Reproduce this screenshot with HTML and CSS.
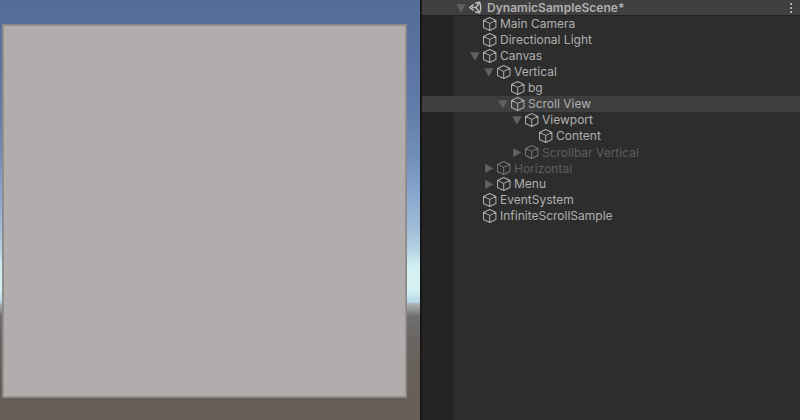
FILE: index.html
```html
<!DOCTYPE html>
<html lang="en">
<head>
<meta charset="utf-8">
<title>DynamicSampleScene</title>
<link rel="stylesheet" href="styles.css">
</head>
<body>
<svg width="0" height="0" class="defs">
  <symbol id="cube" viewBox="0 0 14 14"><path d="M6.7 .6 12.9 3.4V10.6L6.7 13.5 .5 10.6V3.4ZM.5 3.4 6.7 6.4 12.9 3.4M6.7 6.4V13.5"/></symbol>
  <symbol id="down" viewBox="0 0 10 9"><path d="M.2.3h9.4L4.9 8.8Z"/></symbol>
  <symbol id="right" viewBox="0 0 10 9"><path d="M1.2 0v9L9.4 4.5Z"/></symbol>
</svg>
<div class="editor">
  <main class="game"><div class="canvas"></div></main>
  <aside class="hierarchy">
    <header class="scene">
      <svg class="arrow"><use href="#down"/></svg>
      <svg class="unity" viewBox="0 0 13 13"><path d="M4.6 3.4 .9 6.5 4.6 9.6M6 2.2 10.6 1.1 11.6 5M6 10.8 10.6 11.9 11.6 8M11.6 4V9M3 6.5H7L10.3 1.6M7 6.5 10.3 11.4"/></svg>
      <span class="title">DynamicSampleScene*</span>
      <span class="more"><i></i><i></i><i></i></span>
    </header>
    <div class="tree">
      <div class="row l1"><span class="arrow"></span><svg class="cube"><use href="#cube"/></svg><span>Main Camera</span></div>
      <div class="row l1"><span class="arrow"></span><svg class="cube"><use href="#cube"/></svg><span>Directional Light</span></div>
      <div class="row l1"><svg class="arrow"><use href="#down"/></svg><svg class="cube"><use href="#cube"/></svg><span>Canvas</span></div>
      <div class="row l2"><svg class="arrow"><use href="#down"/></svg><svg class="cube"><use href="#cube"/></svg><span>Vertical</span></div>
      <div class="row l3"><span class="arrow"></span><svg class="cube"><use href="#cube"/></svg><span>bg</span></div>
      <div class="row l3 selected"><svg class="arrow"><use href="#down"/></svg><svg class="cube"><use href="#cube"/></svg><span>Scroll View</span></div>
      <div class="row l4"><svg class="arrow"><use href="#down"/></svg><svg class="cube"><use href="#cube"/></svg><span>Viewport</span></div>
      <div class="row l5"><span class="arrow"></span><svg class="cube"><use href="#cube"/></svg><span>Content</span></div>
      <div class="row l4 inactive"><svg class="arrow"><use href="#right"/></svg><svg class="cube"><use href="#cube"/></svg><span>Scrollbar Vertical</span></div>
      <div class="row l2 inactive"><svg class="arrow"><use href="#right"/></svg><svg class="cube"><use href="#cube"/></svg><span>Horizontal</span></div>
      <div class="row l2"><svg class="arrow"><use href="#right"/></svg><svg class="cube"><use href="#cube"/></svg><span>Menu</span></div>
      <div class="row l1"><span class="arrow"></span><svg class="cube"><use href="#cube"/></svg><span>EventSystem</span></div>
      <div class="row l1"><span class="arrow"></span><svg class="cube"><use href="#cube"/></svg><span>InfiniteScrollSample</span></div>
    </div>
  </aside>
</div>
</body>
</html>
```
FILE: styles.css
```css
* { box-sizing: border-box; }
body { margin: 0; background: #2d2d2d; font: 12px/16px Inter, sans-serif; color: #b0b0b0; }
.defs { position: absolute; }
.editor { display: flex; width: 800px; height: 420px; overflow: hidden; }
.game {
  width: 420px;
  padding: 24px 13px 22px 2px;
  background: linear-gradient(#546d98 0, #5871a0 50px, #617dab 110px, #6f8eb7 155px, #86a5cc 190px, #9dbad8 225px, #b5d3e2 250px, #d0edf1 266px, #d8f3f5 288px, #b9d9e9 302px, #a9b1b3 304px, #989a9a 309px, #706e70 316px, #696461 340px, #676059 380px, #665f58 420px);
}
.canvas { height: 374px; border: 1px solid #8c8888; background: #b1adac; box-shadow: inset 0 0 0 1px #969291; }
.hierarchy {
  flex: 1;
  border-left: 2px solid #171717;
  background: linear-gradient(90deg, #242424 32px, #2d2d2d 32px);
}
.scene { display: flex; align-items: center; height: 16px; padding: 0 8px 0 34px; background: #404040; border-bottom: 1px solid #222; }
.title { flex: 1; font-weight: 600; letter-spacing: .03px; }
.arrow { width: 10px; height: 9px; flex: none; margin: 1px 3px 0 0; fill: #606060; }
.unity { width: 13px; height: 13px; margin-right: 5px; fill: none; stroke: #bcbcbc; stroke-width: 1.4; }
.more { display: flex; flex-direction: column; gap: 2px; }
.more i { width: 2px; height: 2px; background: #aaa; }
.row { display: flex; align-items: center; height: 16px; white-space: nowrap; }
.cube { width: 14px; height: 14px; flex: none; margin-right: 3px; fill: none; stroke: #aaa; stroke-width: 1.05; stroke-linejoin: round; }
.l1 { padding-left: 48px; }
.l2 { padding-left: 62px; }
.l3 { padding-left: 76px; }
.l4 { padding-left: 90px; }
.l5 { padding-left: 104px; }
.selected { background: #3e3e3e; }
.inactive { color: #5e5e5e; }
.inactive span { padding-top: 2px; }
.inactive .cube { stroke: #747474; }
```
